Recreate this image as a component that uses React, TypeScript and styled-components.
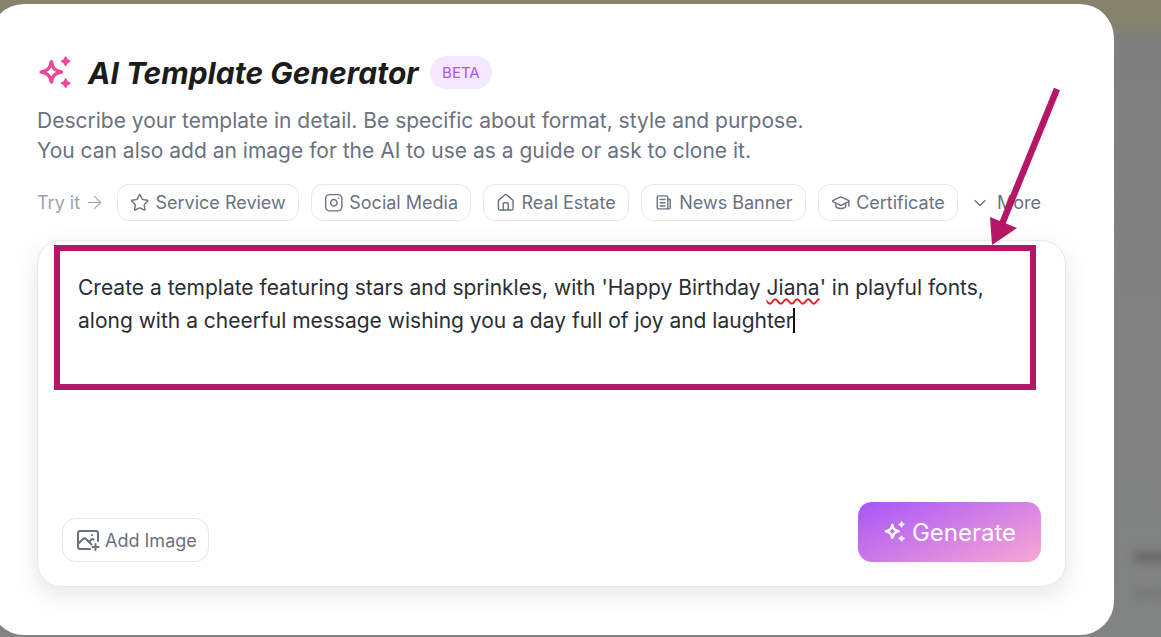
import React from 'react';
import styled, { createGlobalStyle } from 'styled-components';
import { ArrowRight, ChevronDown, GraduationCap, House, Instagram, Star } from 'lucide-react';

const GlobalStyle = createGlobalStyle`
  html, body {
    margin: 0;
    height: 637px;
    overflow: hidden;
    background: #808080;
    font-family: Inter, "Liberation Sans", sans-serif;
  }
`;

const Backdrop = styled.div`
  position: relative;
  width: 1161px;
  height: 637px;
  overflow: hidden;
  padding-top: 4px;
  box-sizing: border-box;
  background: linear-gradient(180deg, #85836c 0, #85836c 22px, #7e7f7e 40px, #828383 100%);
`;

const BlurredLine = styled.div<{ $top: number; $width: number; $shade: string }>`
  position: absolute;
  left: 1134px;
  top: ${(p) => p.$top}px;
  width: ${(p) => p.$width}px;
  height: 10px;
  background: ${(p) => p.$shade};
  filter: blur(4px);
`;

const Modal = styled.div`
  position: relative;
  margin-left: -10px;
  width: 1124px;
  height: 631px;
  box-sizing: border-box;
  padding: 51px 48px 0 47px;
  background: #fff;
  border-radius: 34px;
`;

const Header = styled.div`
  display: flex;
  align-items: center;
  height: 36px;
`;

const Title = styled.h1`
  margin: 0 12px 0 17px;
  font-size: 30px;
  line-height: 36px;
  font-weight: 700;
  font-style: italic;
  color: #1c1c1c;
`;

const Beta = styled.span`
  height: 33px;
  margin-bottom: 2px;
  margin-left: -1px;
  padding: 0 12.5px;
  display: flex;
  align-items: center;
  border-radius: 17px;
  background: #f3e8ff;
  color: #a855f7;
  font-size: 15px;
`;

const Description = styled.p`
  margin: 15px 0 0;
  font-size: 21px;
  line-height: 30px;
  color: #6b7280;
`;

const Examples = styled.div`
  display: flex;
  align-items: center;
  gap: 12px;
  margin-top: 18px;
  height: 37px;
`;

const TryIt = styled.span`
  display: flex;
  align-items: center;
  gap: 4px;
  width: 68px;
  flex-shrink: 0;
  white-space: nowrap;
  color: #9ca3af;
  font-size: 18px;

  svg {
    flex-shrink: 0;
  }
`;

const Chip = styled.button`
  display: flex;
  align-items: center;
  gap: 6px;
  height: 37px;
  padding: 0 12px;
  box-sizing: border-box;
  background: #fff;
  border: 1px solid #e5e7eb;
  border-radius: 12px;
  color: #6b7280;
  font: 400 18px Inter, sans-serif;
  white-space: nowrap;
`;

const More = styled(Chip)`
  border: 0;
  padding: 0;
  gap: 7px;
`;

const InputCard = styled.div`
  margin: 19px 0 0 0;
  width: 1029px;
  height: 347px;
  box-sizing: border-box;
  padding: 30px 41px 24px 40px;
  display: flex;
  flex-direction: column;
  justify-content: space-between;
  border: 1px solid #e5e7eb;
  border-radius: 24px;
  box-shadow: 0 8px 24px rgba(0, 0, 0, 0.1);
`;

const Prompt = styled.div`
  font-size: 21px;
  line-height: 33px;
  color: #2a2e34;
`;

const Misspelled = styled.span`
  text-decoration: underline wavy #e02020 1.5px;
  text-underline-offset: 3px;
`;

const Caret = styled.span`
  display: inline-block;
  width: 2px;
  height: 25px;
  margin: 0 0 -5px -1px;
  background: #111;
`;

const Actions = styled.div`
  display: flex;
  justify-content: space-between;
  align-items: flex-end;
  margin-left: -16px;
  margin-right: -17px;
`;

const AddImage = styled.button`
  display: flex;
  align-items: center;
  gap: 5px;
  height: 44px;
  padding: 0 11px 0 13px;
  box-sizing: border-box;
  background: #fff;
  border: 1px solid #e5e7eb;
  border-radius: 14px;
  color: #6b7280;
  font: 400 18px Inter, sans-serif;
`;

const Generate = styled.button`
  display: flex;
  align-items: center;
  justify-content: center;
  gap: 7px;
  width: 183px;
  height: 60px;
  border: 0;
  border-radius: 14px;
  color: #fff;
  font: 400 24px Inter, sans-serif;
  background: linear-gradient(155deg, #a855f7 0%, #f9a8d4 100%);
`;

const Annotation = styled.div`
  position: absolute;
  left: 64px;
  top: 241px;
  width: 982px;
  height: 145px;
  box-sizing: border-box;
  border: 6px solid #b51665;
`;

const ArrowSvg = styled.svg`
  position: absolute;
  left: 980px;
  top: 80px;
`;

const Sparkles = ({ size, color }: { size: number; color: string }) => (
  <svg width={size} height={size} viewBox="0 0 32 32" fill="none">
    <path
      d="M13.5 5.5 C14.4 11.6 16.9 14.1 23 15 C16.9 15.9 14.4 18.4 13.5 24.5 C12.6 18.4 10.1 15.9 4 15 C10.1 14.1 12.6 11.6 13.5 5.5 Z"
      stroke={color}
      strokeWidth="3.4"
      strokeLinejoin="round"
    />
    <path
      d="M27 1.5 C27.5 3.8 28.2 4.5 30.5 5 C28.2 5.5 27.5 6.2 27 8.5 C26.5 6.2 25.8 5.5 23.5 5 C25.8 4.5 26.5 3.8 27 1.5 Z"
      fill={color}
      stroke={color}
      strokeWidth="2"
      strokeLinejoin="round"
    />
    <path
      d="M27 22 C27.5 24.3 28.2 25 30.5 25.5 C28.2 26 27.5 26.7 27 29 C26.5 26.7 25.8 26 23.5 25.5 C25.8 25 26.5 24.3 27 22 Z"
      fill={color}
      stroke={color}
      strokeWidth="2"
      strokeLinejoin="round"
    />
  </svg>
);

const AddImageIcon = () => (
  <svg width="24" height="24" viewBox="0 0 24 24" fill="none" stroke="currentColor" strokeWidth="2" strokeLinecap="round" strokeLinejoin="round">
    <path d="M22 13V5a2 2 0 0 0-2-2H4a2 2 0 0 0-2 2v14a2 2 0 0 0 2 2h10" />
    <path d="M2 16l5-5c1-1 2-1 3 0l5.5 5.5" />
    <path d="M13.5 13.5l2-2c.6-.6 1.4-.6 2 0" />
    <circle cx="16" cy="7" r="1" fill="currentColor" stroke="none" />
    <path d="M19.5 16v6M16.5 19h6" />
  </svg>
);

const NewsIcon = ({ size, strokeWidth }: { size: number; strokeWidth: number }) => (
  <svg width={size} height={size} viewBox="0 0 24 24" fill="none" stroke="currentColor" strokeWidth={strokeWidth} strokeLinecap="round" strokeLinejoin="round">
    <path d="M4 5a1.5 1.5 0 0 1 1.5-1.5h10A1.5 1.5 0 0 1 17 5v14.5H5.5A1.5 1.5 0 0 1 4 18z" />
    <path d="M17 8h3v9.5a2 2 0 0 1-2 2h-1" />
    <path d="M7.5 8h6M7.5 12h6M7.5 16h6" />
  </svg>
);

const examples = [
  { label: 'Service Review', icon: Star },
  { label: 'Social Media', icon: Instagram },
  { label: 'Real Estate', icon: House },
  { label: 'News Banner', icon: NewsIcon },
  { label: 'Certificate', icon: GraduationCap },
];

export default function App() {
  return (
    <Backdrop>
      <GlobalStyle />
      <BlurredLine $top={552} $width={40} $shade="#666866" />
      <BlurredLine $top={589} $width={30} $shade="#777978" />
      <Modal>
        <Header>
          <Sparkles size={34} color="#ec4899" />
          <Title>AI Template Generator</Title>
          <Beta>BETA</Beta>
        </Header>
        <Description>
          Describe your template in detail. Be specific about format, style and purpose.
          <br />
          You can also add an image for the AI to use as a guide or ask to clone it.
        </Description>
        <Examples>
          <TryIt>
            Try it <ArrowRight size={21} strokeWidth={1.25} />
          </TryIt>
          {examples.map(({ label, icon: Icon }) => (
            <Chip key={label}>
              <Icon size={19.5} strokeWidth={1.75} />
              {label}
            </Chip>
          ))}
          <More>
            <ChevronDown size={20} strokeWidth={1.5} />
            More
          </More>
        </Examples>
        <InputCard>
          <Prompt>
            Create a template featuring stars and sprinkles, with 'Happy Birthday <Misspelled>Jiana</Misspelled>' in
            playful fonts,
            <br />
            along with a cheerful message wishing you a day full of joy and laughter
            <Caret />
          </Prompt>
          <Actions>
            <AddImage>
              <AddImageIcon />
              Add Image
            </AddImage>
            <Generate>
              <Sparkles size={22} color="#fff" />
              Generate
            </Generate>
          </Actions>
        </InputCard>
        <Annotation />
        <ArrowSvg width="100" height="180" viewBox="0 0 100 180">
          <line x1="87" y1="5" x2="32" y2="140" stroke="#b51665" strokeWidth="6.5" />
          <polygon points="22,161 20,133 47,144" fill="#b51665" />
        </ArrowSvg>
      </Modal>
    </Backdrop>
  );
}
